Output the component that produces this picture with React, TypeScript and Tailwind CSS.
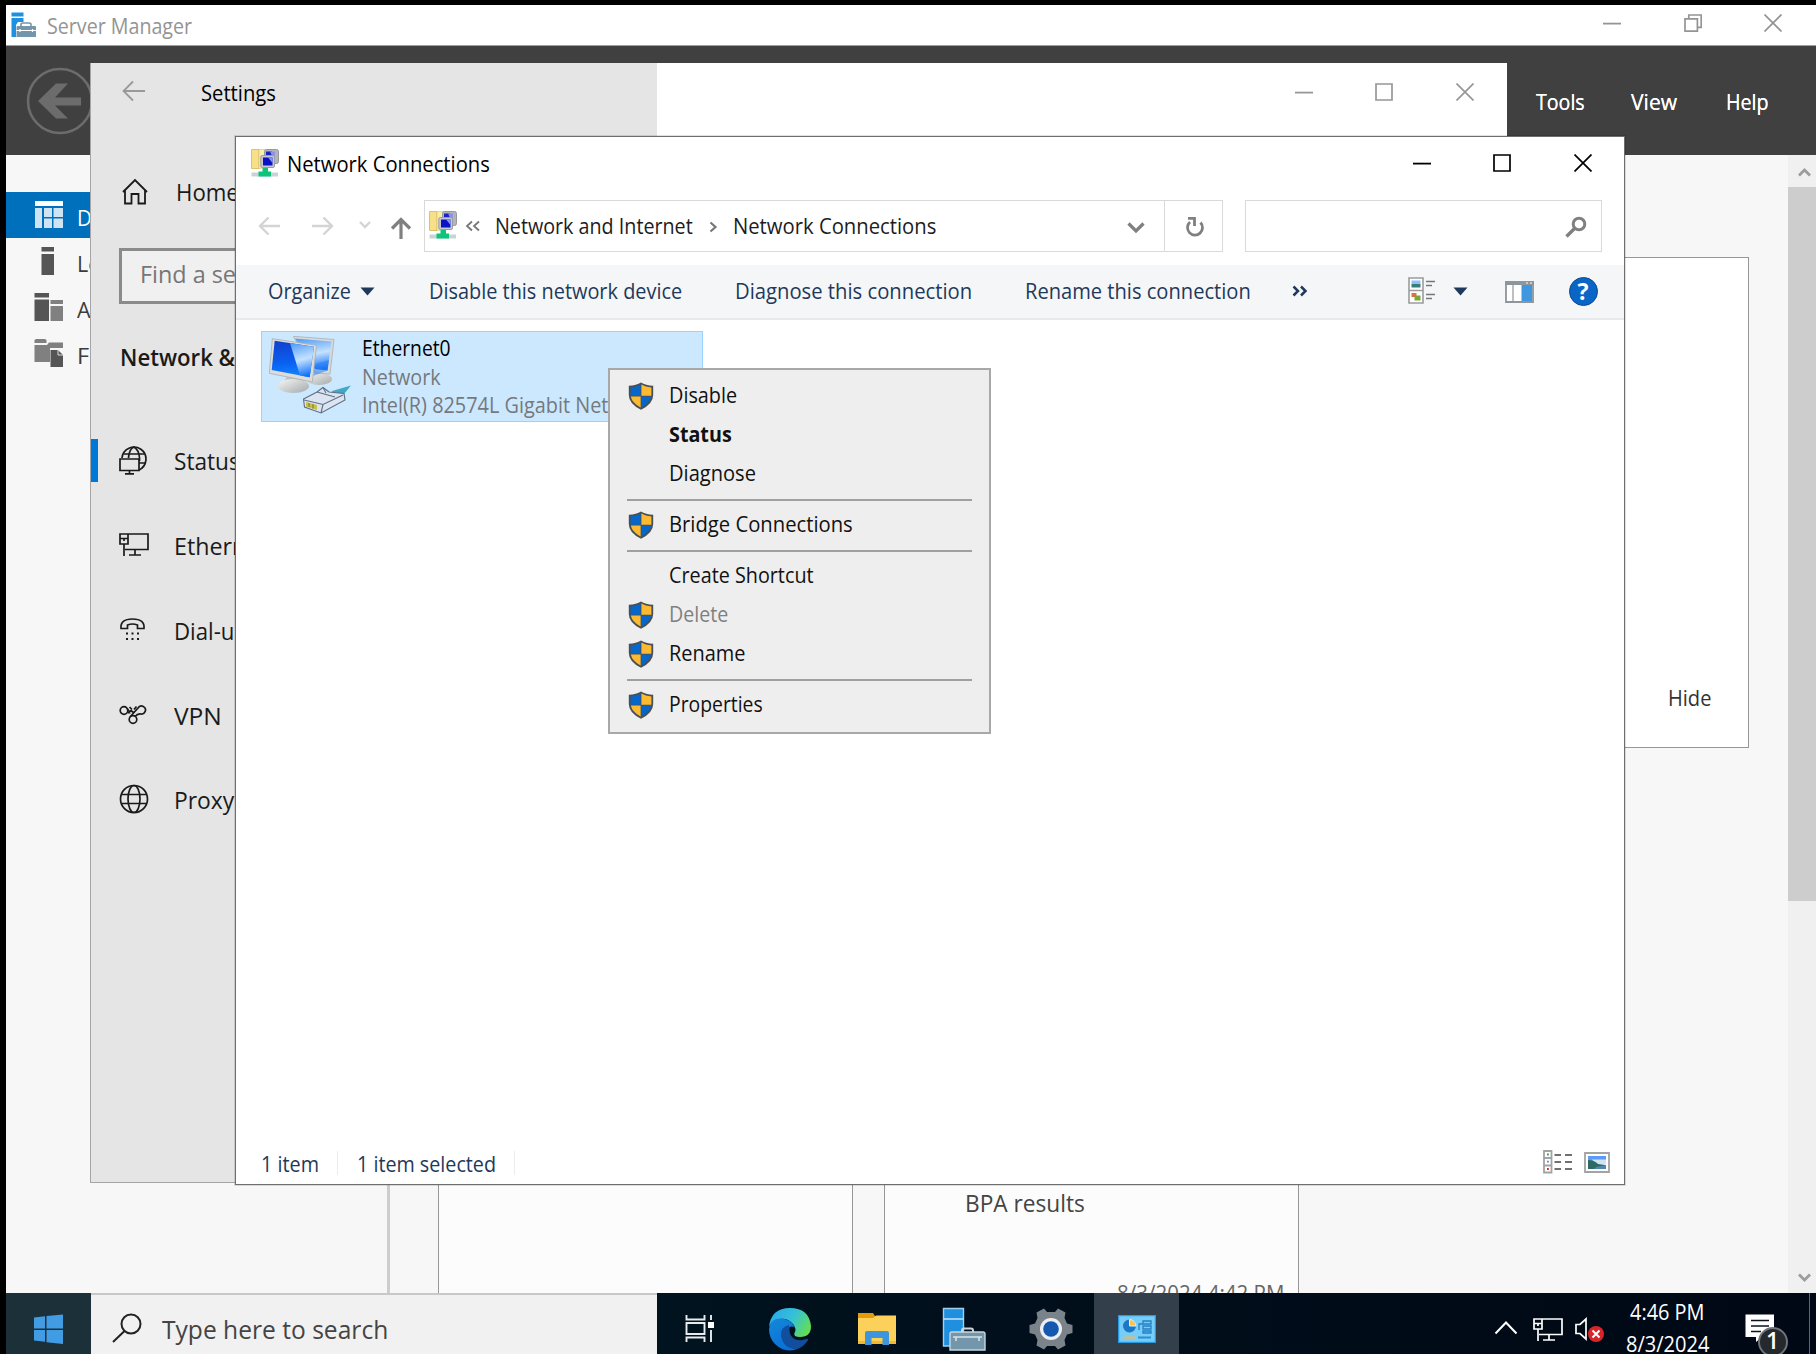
import { useLayoutEffect, useRef } from "react";
import type { ReactNode } from "react";
import clsx from "clsx";

interface LabelProps {
  w: number;
  children: string;
  className?: string;
}

// Fits a single line of text into a fixed width, the way Segoe UI would run
function Label({ w, children, className }: LabelProps) {
  const ref = useRef<HTMLSpanElement>(null);

  useLayoutEffect(() => {
    const el = ref.current;
    if (!el) return;
    el.style.transform = `scaleX(${w / el.offsetWidth})`;
  }, [w, children]);

  return (
    <span className={clsx("block shrink-0 whitespace-nowrap", className)} style={{ width: w }}>
      <span ref={ref} className="inline-block origin-left">
        {children}
      </span>
    </span>
  );
}

interface WindowControlsProps {
  restored?: boolean;
  className?: string;
}

function WindowControls({ restored, className }: WindowControlsProps) {
  return (
    <div className={clsx("flex shrink-0", className)}>
      <div className="w-[80.5px] flex justify-center">
        <svg width="18" height="18" fill="none" stroke="currentColor" strokeWidth="1.8">
          <path d="M0 9.6H18" />
        </svg>
      </div>
      <div className="w-[80.5px] flex justify-center">
        <svg width="18" height="18" fill="none" stroke="currentColor" strokeWidth="1.7">
          {restored ? (
            <path d="M1 4.8H13.4V17.2H1ZM4.8 4.8V1H17.2V13.4H13.4" />
          ) : (
            <path d="M1 1H17V17H1Z" />
          )}
        </svg>
      </div>
      <div className="w-[80.5px] flex justify-center">
        <svg width="18" height="18" fill="none" stroke="currentColor" strokeWidth="1.7">
          <path d="M0.5 0.5L17.5 17.5M17.5 0.5L0.5 17.5" />
        </svg>
      </div>
    </div>
  );
}

function ServerIcon({ className }: { className?: string }) {
  return (
    <svg viewBox="0 0 44 44" className={className}>
      <path d="M1.500 1.500H21.500V39H1.500Z" fill="#1f8fdf" stroke="#9fd0f0" strokeWidth="1.400" />
      <path d="M1.500 12H21.500" stroke="#bfe0f5" strokeWidth="1.600" />
      <path d="M20 25V23.500Q20 21.500 22 21.500H29Q31 21.500 31 23.500V25" fill="none" stroke="#c8d6de" strokeWidth="2" />
      <path d="M10 25H41Q43 25 43 27V43H8V27Q8 25 10 25Z" fill="#7396ab" stroke="#c8d6de" strokeWidth="1.400" />
      <path d="M11 30H40M14 30V34M37 30V34" stroke="#d7e2e8" strokeWidth="1.600" fill="none" />
    </svg>
  );
}

function ServerTitleIcon() {
  return (
    <svg width="26" height="26" viewBox="0 0 26 26" className="shrink-0">
      <path d="M0.5 0.5H12.5V4.5H0.5ZM0.5 6H12.5V10H7L5 13V25H0.5Z" fill="#1f8fdf" />
      <path d="M10 14V12.5Q10 11 12 11H18Q20 11 20 12.5V14" fill="none" stroke="#7396ab" strokeWidth="1.6" />
      <path d="M6.5 14H24Q25 14 25 15V18H5.5V15Q5.5 14 6.5 14ZM5.5 19H25V25H5.5Z" fill="#7396ab" />
      <path d="M9 17V20M21.5 17V20" stroke="#fff" strokeWidth="1.2" />
    </svg>
  );
}

function NetFolderIcon() {
  return (
    <svg width="28" height="30" viewBox="0 0 28 30" className="shrink-0">
      <path d="M0.500 1.500H8V20.500H0.500Z" fill="#f7e08a" stroke="#dcc26a" />
      <path d="M8 1.500H15V19.500L8 20.500Z" fill="#fbeea6" stroke="#dcc26a" strokeWidth="0.600" />
      <rect x="13.500" y="1.500" width="14" height="14" rx="2" fill="#b4b4ba" stroke="#97979e" />
      <path d="M15 3.500H21V8H15Z" fill="#1a23c0" />
      <path d="M19 3.500H24V8H21Z" fill="#8b93e8" />
      <rect x="9.800" y="7.500" width="13.700" height="12" rx="1.500" fill="#c8c8d0" stroke="#9c9ca8" />
      <path d="M12 9.500H21.500V17.500H12Z" fill="#0a12c4" />
      <path d="M17 9.500H21.500V15Z" fill="#7f95f3" />
      <path d="M0.500 24.500H27V28.500H0.500Z" fill="#c9d2d4" />
      <path d="M11.500 20H17V23.500H20V28.500H7.500V23.500H11.500Z" fill="#0cc47a" />
    </svg>
  );
}

function Shield() {
  return (
    <svg width="26" height="28" viewBox="0 0 26 28">
      <path d="M13 0.400Q8.500 3.200 0.800 3.800V13Q0.800 21.800 13 27.800Q25.200 21.800 25.200 13V3.800Q17.500 3.200 13 0.400Z" fill="#4a4f55" />
      <path d="M12.600 2.600Q8.500 5 2.600 5.500V13.800H12.600Z" fill="#0667cb" />
      <path d="M13.400 2.600Q17.500 5 23.400 5.500V13.800H13.400Z" fill="#fdb930" />
      <path d="M12.600 14.500H2.800Q4 20.800 12.600 25.500Z" fill="#fdb930" />
      <path d="M13.400 14.500H23.200Q22 20.800 13.400 25.500Z" fill="#0667cb" />
    </svg>
  );
}

function EthernetIcon({ className }: { className?: string }) {
  return (
    <svg width="30" height="24" fill="none" stroke="currentColor" strokeWidth="1.7" className={className}>
      <path d="M9 1H29V16.500H6M1 1H9V11H1ZM1 5.500H9M5 5V8M5 11V23M16 16.500V22M10 22H22" />
    </svg>
  );
}

function Globe() {
  return (
    <svg width="30" height="30" fill="none" stroke="currentColor" strokeWidth="1.7">
      <circle cx="15" cy="15" r="13.500" />
      <ellipse cx="15" cy="15" rx="6" ry="13.500" />
      <path d="M2.500 10.500H27.500M2.500 19.500H27.500" />
    </svg>
  );
}

function StatusIcon() {
  return (
    <svg width="30" height="30" fill="none" stroke="currentColor" strokeWidth="1.700">
      <path d="M3 13A12 12 0 1 1 20 25" />
      <path d="M9.500 13Q10 4 15 2Q20 5 20.500 13V16M4.500 9H25.500M20 18H27" />
      <path d="M1 14H20V25.500H1ZM10.500 25.500V28.500M6 28.800H15" />
    </svg>
  );
}

function DialIcon() {
  return (
    <svg width="30" height="24" fill="none" stroke="currentColor" strokeWidth="1.700">
      <path d="M2 10.500Q1 1 13.500 1T25 10.500H18.500V7Q13.500 5 8.500 7V10.500Z" />
      <path d="M7 15.500h2M12.500 15.500h2M18 15.500h2M7 21h2M12.500 21h2M18 21h2" strokeWidth="2" />
    </svg>
  );
}

function VpnIcon() {
  return (
    <svg width="30" height="20" fill="none" stroke="currentColor" strokeWidth="1.700">
      <circle cx="5" cy="5.500" r="3.800" />
      <circle cx="14" cy="14.500" r="3.800" />
      <path d="M8.500 4Q11 7 10.500 8.500M11 12L19 3A4 4 0 1 1 21 8.800Q18 9 16 11.500M10.500 2L13 4.500M17.500 1.500L15 4.500M9 8L12 5.500L15 8" />
    </svg>
  );
}

function HomeIcon() {
  return (
    <svg width="28" height="28" fill="none" stroke="currentColor" strokeWidth="1.800">
      <path d="M2 14L14 2L26 14M4 12.500V25.500H10.500V16H17.500V25.500H24V12.500" />
    </svg>
  );
}

const serverNav = [
  {
    text: "Dashboard",
    w: 106,
    icon: (
      <svg width="30" height="30">
        <path d="M1 1H29V6H1Z" fill="#fff" />
        <path d="M1 8H8V28H1ZM10 8H18V17H10ZM19.500 8H29V17H19.500ZM10 18.500H18V28H10ZM19.500 18.500H29V28H19.500Z" fill="#cfe4f3" />
      </svg>
    ),
  },
  {
    text: "Local Server",
    w: 122,
    icon: (
      <svg width="30" height="30" fill="#555">
        <path d="M7.500 1H20V5.500H7.500ZM7.500 8H20V29H7.500Z" />
      </svg>
    ),
  },
  {
    text: "All Servers",
    w: 104,
    icon: (
      <svg width="30" height="30" fill="#555">
        <path d="M0.500 1H15V5.500H0.500ZM0.500 7.500H15V29H0.500Z" />
        <path d="M16.500 8H29V12H16.500ZM16.500 14H29V29H16.500Z" fill="#808080" />
      </svg>
    ),
  },
  {
    text: "File and Storage Services",
    w: 270,
    icon: (
      <svg width="30" height="30" fill="#808080">
        <path d="M0.500 2L2 1H11L12.500 2V5H0.500ZM0.500 7H13L15 4.500H29V10H16V24H0.500Z" />
        <path d="M16.500 12H24L29 17V29H16.500Z" fill="#555" />
        <path d="M24 12V17H29" fill="none" stroke="#ddd" />
      </svg>
    ),
  },
];

function ServerManager() {
  return (
    <div className="absolute left-[6px] top-[5px] w-[1810px] h-[1288px] bg-[#f7f7f7] flex flex-col overflow-hidden">
      <div className="h-[41px] shrink-0 bg-white border-b border-[#a0a0a0] flex items-center pl-[5px] pr-[2.5px] text-[#949494]">
        <ServerTitleIcon />
        <Label w={145} className="ml-[10px] mt-[3px] text-[21px]">Server Manager</Label>
        <WindowControls restored className="ml-auto mb-1" />
      </div>

      <div className="h-[109px] shrink-0 bg-[#404040] flex text-white">
        <svg width="68" height="68" viewBox="0 0 68 68" className="ml-5 mt-[20.500px] shrink-0">
          <circle cx="34" cy="34" r="32" fill="none" stroke="#6c6c6c" strokeWidth="2.600" />
          <path d="M12 34L30 16.500H42L29 30.500H55V38.500H29L42 51.500H30Z" fill="#6c6c6c" />
        </svg>
        <div className="ml-auto mr-[47px] mt-[41px] flex text-[22px] leading-[28px] [text-shadow:0_0_0.5px_white]">
          <Label w={49} className="mr-[46px]">Tools</Label>
          <Label w={46} className="mr-[49px]">View</Label>
          <Label w={43}>Help</Label>
        </div>
      </div>

      <div className="flex-1 min-h-0 flex">
        <div className="w-[381px] shrink-0 pt-[37px]">
          {serverNav.map((item, i) => (
            <div
              key={item.text}
              className={clsx(
                "h-[46px] flex items-center pl-[28px] text-[22px]",
                i === 0 ? "bg-[#0070bc] text-white" : "text-[#3c3c3c]"
              )}
            >
              {item.icon}
              <Label w={item.w} className="ml-[12.500px] mt-[4px]">{item.text}</Label>
            </div>
          ))}
        </div>
        <div className="w-[3px] bg-[#cdcdcd]" />

        <div className="flex-1 pl-[48px] pt-[102px] bg-[#f7f7f7]">
          <div className="w-[1311px] h-[491px] border-[1.5px] border-[#979797] bg-white flex justify-end items-end pr-[37px] pb-[33px] text-[21px] text-[#333]">
            <Label w={43}>Hide</Label>
          </div>
          <div className="mt-[300px] flex gap-[31px]">
            <div className="w-[415px] h-[400px] border-[1.5px] border-[#979797] bg-[#fcfcfc]" />
            <div className="w-[415px] h-[400px] border-[1.5px] border-[#979797] bg-[#fcfcfc] pt-[138px] pl-[80px]">
              <Label w={120} className="text-[24px] leading-[32px] text-[#444]">BPA results</Label>
              <Label w={167} className="ml-[152px] mt-[60px] text-[21px] leading-[28px] text-[#666]">8/3/2024 4:42 PM</Label>
            </div>
          </div>
        </div>

        <div className="w-7 shrink-0 bg-[#f0f0f0] flex flex-col items-center text-[#9c9c9c]">
          <svg width="28" height="32" fill="none" stroke="currentColor" strokeWidth="2.800">
            <path d="M11 20.500L16.500 15L22 20.500" />
          </svg>
          <div className="w-full h-[714px] bg-[#cdcdcd]" />
          <svg width="28" height="32" fill="none" stroke="currentColor" strokeWidth="2.800" className="mt-auto">
            <path d="M11 13.500L16.500 19L22 13.500" />
          </svg>
        </div>
      </div>
    </div>
  );
}

const settingsNav = [
  { text: "Status", w: 66, icon: <StatusIcon /> },
  { text: "Ethernet", w: 94, icon: <EthernetIcon /> },
  { text: "Dial-up", w: 74, icon: <DialIcon /> },
  { text: "VPN", w: 48, icon: <VpnIcon /> },
  { text: "Proxy", w: 60, icon: <Globe /> },
];

function Settings() {
  return (
    <div className="absolute left-[90px] top-[63px] w-[1417px] h-[1120px] bg-white border-[1.5px] border-t-0 border-r-0 border-[#a5a5a5] flex">
      <div className="w-[566px] shrink-0 bg-[#e5e5e5] text-[24px] text-[#1a1a1a]">
        <div className="h-[56px] flex items-center pl-[31px]">
          <svg width="24" height="22" fill="none" stroke="#999" strokeWidth="1.800">
            <path d="M23 11H1.500M11 1.500L1.500 11L11 20.500" />
          </svg>
          <Label w={75} className="ml-[55px] mt-[5px] text-[21px] text-black">Settings</Label>
        </div>
        <div className="mt-[49px] h-[48px] flex items-center pl-[30px]">
          <HomeIcon />
          <Label w={63} className="ml-[26.500px]">Home</Label>
        </div>
        <div className="ml-[28px] mt-[32px] w-[509px] h-[56px] border-[3px] border-[#8a8a8a] bg-[#f0f0f0] flex items-center pl-[18px] pb-[4px] text-[#767676]">
          <Label w={145}>Find a setting</Label>
        </div>
        <Label w={208} className="ml-[28.500px] mt-[37px] leading-[32px] font-semibold">Network &amp; Internet</Label>
        <div className="mt-[45px]">
          {settingsNav.map((item, i) => (
            <div key={item.text} className="h-[84.750px] flex items-center">
              <div className={clsx("w-[7px] h-[43px]", i === 0 && "bg-[#0078d7]")} />
              <div className="w-[30px] ml-[20.500px]">{item.icon}</div>
              <Label w={item.w} className="ml-[25.500px] mt-[2px]">{item.text}</Label>
            </div>
          ))}
        </div>
      </div>
      <WindowControls className="ml-auto mr-[2px] mt-[19.500px] text-[#979797]" />
    </div>
  );
}

function MenuItem({ w, shield, children, className }: LabelProps & { shield?: boolean }) {
  return (
    <div className={clsx("h-[39px] flex items-center pl-[18px]", className)}>
      <div className="w-[26px] mr-[15px]">{shield && <Shield />}</div>
      <Label w={w} className="mt-[1px]">{children}</Label>
    </div>
  );
}

function MenuSeparator() {
  return (
    <div className="h-[12px] flex items-center px-[17px] pt-px">
      <div className="w-full h-[2px] bg-[#a0a0a0]" />
    </div>
  );
}

function ContextMenu() {
  return (
    <div className="absolute left-[608px] top-[368px] w-[383px] h-[366px] bg-[#eee] border-2 border-[#a8a8a8] pt-[6px] text-[21px] text-[#111]">
      <MenuItem w={68} shield>Disable</MenuItem>
      <MenuItem w={63} className="font-bold">Status</MenuItem>
      <MenuItem w={87}>Diagnose</MenuItem>
      <MenuSeparator />
      <MenuItem w={184} shield>Bridge Connections</MenuItem>
      <MenuSeparator />
      <MenuItem w={145}>Create Shortcut</MenuItem>
      <MenuItem w={59} shield className="text-[#808080]">Delete</MenuItem>
      <MenuItem w={77} shield>Rename</MenuItem>
      <MenuSeparator />
      <MenuItem w={94} shield>Properties</MenuItem>
    </div>
  );
}

function AdapterIcon() {
  return (
    <svg width="84" height="82" viewBox="0 0 84 82" className="shrink-0">
      <defs>
        <linearGradient id="screen" x1="0.200" y1="0" x2="0.300" y2="1">
          <stop offset="0" stopColor="#1240cc" />
          <stop offset="0.600" stopColor="#0a5ff0" />
          <stop offset="1" stopColor="#0f86ff" />
        </linearGradient>
        <linearGradient id="glare" x1="0.300" y1="0" x2="0.500" y2="1">
          <stop offset="0" stopColor="#58a0f8" />
          <stop offset="0.500" stopColor="#c4e2ff" />
          <stop offset="1" stopColor="#0f6ff8" />
        </linearGradient>
        <linearGradient id="stand" x1="0" y1="0" x2="1" y2="1">
          <stop offset="0" stopColor="#f6f6f4" />
          <stop offset="1" stopColor="#a4a9ac" />
        </linearGradient>
      </defs>
      <ellipse cx="50" cy="43" rx="13" ry="6" fill="url(#stand)" />
      <path d="M24.300 0.300L65 3.500L61 38L46 37Z" fill="#d8dada" stroke="#a9aeb0" strokeWidth="0.800" />
      <path d="M26 2.500L62.500 5.500L58.500 34.500L46 33Z" fill="url(#glare)" />
      <path d="M44 40L58.500 34.500L60 24L46 28Z" fill="#1f7cf5" opacity="0.500" />
      <path d="M18 40H33L36 48H14Z" fill="#c0c5c7" />
      <ellipse cx="24.500" cy="50" rx="15.500" ry="7" fill="url(#stand)" />
      <path d="M3.300 2.700L47.500 9.300L43.300 46L0.300 37.300Z" fill="#dcdcda" stroke="#a9aeb0" strokeWidth="0.800" />
      <path d="M5.700 4.700L45 10.700L40.700 41.300L2.700 34Z" fill="url(#screen)" />
      <path d="M21 7L45 10.700L40.700 41.300L31 39.500Z" fill="url(#glare)" />
      <path d="M63 55L82 49.500L75 58L66 61Z" fill="#3fa9c6" />
      <path d="M34.500 63L48 56L54 51.500L60 56L75 57.500L76 64L52 77L35.500 71Z" fill="#dbe4f0" stroke="#5f6f86" strokeWidth="1.100" />
      <path d="M35 64L54 68.500L74 59M54 68.500L52 77M48 56L66 61M54 51.500L57 57" stroke="#5f6f86" strokeWidth="1.100" fill="none" />
      <path d="M37 66L48 69V74L37 70.500Z" fill="#c9bf46" />
      <path d="M40 67V71M44 68V72.500" stroke="#77752a" strokeWidth="1" />
    </svg>
  );
}

function CommandBar() {
  return (
    <div className="h-[55px] shrink-0 bg-[#f5f6f7] border-b-2 border-[#e8ebee] flex items-center pl-[32px] pr-[26.500px] text-[21px] text-[#1e395b]">
      <Label w={83}>Organize</Label>
      <svg width="15" height="9" className="ml-[9px]" fill="currentColor">
        <path d="M0.500 0.500H14.500L7.500 8.500Z" />
      </svg>
      <Label w={253} className="ml-[53.500px]">Disable this network device</Label>
      <Label w={237} className="ml-[53px]">Diagnose this connection</Label>
      <Label w={226} className="ml-[53.500px]">Rename this connection</Label>
      <svg width="16" height="12" className="ml-[40.500px] mb-px" fill="none" stroke="currentColor" strokeWidth="2.500">
        <path d="M1.500 1.500L6 6L1.500 10.500M9 1.500L13.500 6L9 10.500" />
      </svg>
      <svg width="28" height="28" className="ml-auto mb-[2px]">
        <path d="M1 1H15V26H1ZM1 13.500H15" fill="#fff" stroke="#9c9c9c" strokeWidth="1.600" />
        <path d="M3.500 3.500H12.500V7H3.500Z" fill="#8cc0fa" />
        <path d="M3.500 7H12.500V10.500H3.500Z" fill="#3c7a7a" />
        <path d="M3.500 16H8.500V20H3.500Z" fill="#e0703a" />
        <path d="M6.500 18.500H12.500V23.500H6.500Z" fill="#7aa63a" />
        <path d="M18 4.500H27M18 8.500H24M18 17.500H27M18 21.500H24" stroke="#777" strokeWidth="1.500" />
      </svg>
      <svg width="15" height="9" className="ml-[17px]" fill="currentColor">
        <path d="M0.500 0.500H14.500L7.500 8.500Z" />
      </svg>
      <svg width="29" height="22" className="ml-[37px]">
        <path d="M1 1H28V21H1Z" fill="#fff" stroke="#8e959b" strokeWidth="1.800" />
        <path d="M0 0H29V4H0Z" fill="#8e959b" />
        <path d="M8 4V20" stroke="#aaa" strokeWidth="1.500" />
        <path d="M16.500 4H27V20H16.500Z" fill="#3f97e0" />
        <path d="M21 2H23M25 2H27" stroke="#fff" />
      </svg>
      <div className="ml-[35px] w-[29px] h-[29px] rounded-full bg-[#0a66c6] border border-[#0a4a94] text-white font-bold text-[23px] leading-[27px] text-center">
        ?
      </div>
    </div>
  );
}

function NetworkConnections() {
  return (
    <div className="absolute left-[235px] top-[136px] w-[1390px] h-[1049px] bg-white border-[1.5px] border-[#6e6e6e] shadow-[0_0_0_1px_rgba(0,0,0,0.12)] flex flex-col">
      <div className="h-[53px] shrink-0 flex items-center pl-[14.500px] text-black text-[21px]">
        <div className="mb-[2px]">
          <NetFolderIcon />
        </div>
        <Label w={203} className="ml-[8.500px] mt-[2px]">Network Connections</Label>
        <WindowControls className="ml-auto mr-[1px] mb-[2px]" />
      </div>

      <div className="h-[75px] shrink-0 flex pt-[10px] text-[21px] text-[#1c1c1c]">
        <div className="w-[187.500px] shrink-0 h-[52px] flex items-center pl-[22px] text-[#d4d4d4]">
          <svg width="22" height="20" fill="none" stroke="currentColor" strokeWidth="2.400">
            <path d="M22 10H2M10.500 1.500L2 10L10.500 18.500" />
          </svg>
          <svg width="22" height="20" className="ml-[31.500px]" fill="none" stroke="currentColor" strokeWidth="2.400">
            <path d="M0 10H20M11.500 1.500L20 10L11.500 18.500" />
          </svg>
          <svg width="12" height="8" className="ml-[25px] mb-[2px]" fill="none" stroke="currentColor" strokeWidth="2.400">
            <path d="M1 1L6 6L11 1" />
          </svg>
          <svg width="22" height="22" className="ml-[19px] mt-[3px]" fill="none" stroke="#808080" strokeWidth="3.200">
            <path d="M11 22V3M2 11.500L11 2.500L20 11.500" />
          </svg>
        </div>
        <div className="w-[741px] shrink-0 h-[52px] border-[1.500px] border-[#d9d9d9] flex items-center pl-[4px] pr-[18.500px]">
          <div className="mb-[2px]">
            <NetFolderIcon />
          </div>
          <svg width="16" height="12" className="ml-[8px]" fill="none" stroke="#777" strokeWidth="1.800">
            <path d="M7 1.500L2 6L7 10.500M14 1.500L9 6L14 10.500" />
          </svg>
          <Label w={198} className="ml-[14px] mt-px">Network and Internet</Label>
          <svg width="9" height="12" className="ml-[16px] mt-[2px]" fill="none" stroke="#777" strokeWidth="2.200">
            <path d="M1.500 1.500L6.500 6L1.500 10.500" />
          </svg>
          <Label w={203.5} className="ml-[15.500px] mt-px">Network Connections</Label>
          <svg width="18" height="12" className="ml-auto mt-1" fill="none" stroke="#808080" strokeWidth="3.200">
            <path d="M1.500 1.500L9 9L16.500 1.500" />
          </svg>
        </div>
        <div className="w-[58px] shrink-0 h-[52px] border-[1.500px] border-l-0 border-[#d9d9d9] flex items-center justify-center">
          <svg width="20" height="22" className="mt-[2px] ml-[3px]" fill="none" stroke="#808080" strokeWidth="2.800">
            <path d="M15.500 6.500A7.500 7.500 0 1 1 5 6" />
            <path d="M3 2.400H9.500V10" />
          </svg>
        </div>
        <div className="ml-[22px] w-[357px] h-[52px] border-[1.500px] border-[#d9d9d9] flex items-center justify-end pr-[14px]">
          <svg width="22" height="22" className="mt-px" fill="none" stroke="#808080" strokeWidth="3">
            <circle cx="14" cy="8" r="5.800" />
            <path d="M10 12L1.500 20.500" strokeWidth="3.400" />
          </svg>
        </div>
      </div>

      <CommandBar />

      <div className="flex-1 pl-[25px] pt-[10.500px]">
        <div className="w-[442px] h-[91.500px] bg-[#cce8ff] border-[1.500px] border-[#99d1ff] flex pl-[7px] pt-[4.500px]">
          <AdapterIcon />
          <div className="ml-[8.500px] -mt-[2px] text-[21px] leading-[28.500px] text-[#75797d]">
            <Label w={89} className="text-black">Ethernet0</Label>
            <Label w={79}>Network</Label>
            <Label w={246}>Intel(R) 82574L Gigabit Net</Label>
          </div>
        </div>
      </div>

      <div className="h-[42px] shrink-0 flex items-center pl-[24.500px] pr-[14px] text-[21px] text-[#1e395b]">
        <Label w={57.5} className="mt-[3px]">1 item</Label>
        <div className="ml-[19px] w-px h-[24px] bg-[#ececec]" />
        <Label w={139} className="ml-[18.500px] mt-[3px]">1 item selected</Label>
        <div className="ml-[18px] w-px h-[24px] bg-[#ececec]" />
        <svg width="30" height="24" className="ml-auto mb-[2px]">
          <path d="M1 1H8.500V22.500H1ZM1 8H8.500M1 15.500H8.500" fill="#fff" stroke="#a3a3a3" strokeWidth="1.800" />
          <path d="M4 4.500h1.800" stroke="#3c9a62" strokeWidth="1.800" />
          <path d="M4 11.700h1.800" stroke="#3c8aff" strokeWidth="1.800" />
          <path d="M4 19h1.800" stroke="#e02020" strokeWidth="1.800" />
          <path d="M11.500 5H18M22 5H29M11.500 12H18M22 12H29M11.500 19H18M22 19H29" stroke="#707070" strokeWidth="1.800" />
        </svg>
        <svg width="26" height="21" className="ml-[11px] mb-[2px]">
          <path d="M1 1H25V20H1Z" fill="#fff" stroke="#a3a3a3" strokeWidth="1.800" />
          <path d="M4 4H22V10H4Z" fill="#5d9cf5" />
          <path d="M8 7.500H22V12H12Z" fill="#cfe3f5" />
          <path d="M4 8Q10 8 14 12L22 13V17H4Z" fill="#2f6a62" />
          <path d="M12 15L22 13V17H10Z" fill="#4f86b5" />
        </svg>
      </div>
    </div>
  );
}

function TaskButton({ children, active }: { children: ReactNode; active?: boolean }) {
  return (
    <div
      className={clsx(
        "shrink-0 h-full flex items-center justify-center pt-[10px]",
        active ? "w-[85px] bg-[#333f4a]" : "w-[87px]"
      )}
    >
      {children}
    </div>
  );
}

function Taskbar() {
  return (
    <div className="absolute left-[6px] top-[1293px] w-[1810px] h-[61px] bg-linear-to-r from-[#031c24] via-[#00101c] to-[#000815] flex overflow-hidden">
      <div className="w-[85px] shrink-0 bg-[#1b3038] pl-[28px] pt-[20.500px]">
        <svg width="30" height="31" fill="#429ce3">
          <path d="M0 3.500L11 2.300V14.500H0ZM12.500 2L29 0.500V14.500H12.500ZM0 16H11V27.800L0 26.500ZM12.500 16H29V30L12.500 28.200Z" />
        </svg>
      </div>
      <div className="w-[566px] shrink-0 bg-[#f1f1f1] border-t-2 border-[#c8c8c8] flex items-center pl-[21px] pt-[9px] text-[26px] text-[#444]">
        <svg width="30" height="30" className="mb-[3px]" fill="none" stroke="#222" strokeWidth="2">
          <circle cx="19" cy="11" r="9.500" />
          <path d="M12.500 18L1 29" />
        </svg>
        <Label w={226} className="ml-[20px] mt-px">Type here to search</Label>
      </div>

      <div className="w-[86px] mr-[3px] shrink-0 flex justify-center pt-[20.500px]">
        <svg width="30" height="30" fill="none" stroke="#e8ecee" strokeWidth="1.900">
          <path d="M1.500 1V5.500H19.500V1M1.500 9H19.500V20H1.500ZM1.500 28V23.500H19.500V28M26 1V6M26 16V28" />
          <path d="M23 8H29V14H23Z" fill="#fff" stroke="none" />
        </svg>
      </div>
      <TaskButton>
        <svg width="44" height="44" viewBox="0 0 44 44">
          <defs>
            <linearGradient id="edgeTop" x1="0" y1="0.300" x2="1" y2="0.700">
              <stop offset="0" stopColor="#2ba8ea" />
              <stop offset="0.500" stopColor="#35c1d8" />
              <stop offset="1" stopColor="#66e04c" />
            </linearGradient>
            <linearGradient id="edgeBody" x1="0" y1="0" x2="0.600" y2="1">
              <stop offset="0" stopColor="#1389d8" />
              <stop offset="1" stopColor="#0a6fd8" />
            </linearGradient>
          </defs>
          <path d="M1 20Q3 1 22 1T43 19Q43 30 32 30Q25 30 26.500 26Q29 22 25 17Q18 9 8 13Q3 15 1 20Z" fill="url(#edgeTop)" />
          <path d="M1 22Q2 11 13 11.500Q23 12 26.500 20Q21 18 19 24Q17 36 28 42.500Q16 46 7 37Q1 31 1 22Z" fill="url(#edgeBody)" />
          <path d="M21 18Q12 20 13 29Q15 41 28 42.500Q36 40 40 33Q40 31 38 32Q30 35 25 31Q21 27 21.500 22Z" fill="#114f9e" />
        </svg>
      </TaskButton>
      <TaskButton>
        <svg width="40" height="34" viewBox="0 0 40 34">
          <path d="M1 1H16L18 4V8H1Z" fill="#e39b08" />
          <path d="M1 6H16L19 3.500H39V32H1Z" fill="#fbd15c" />
          <path d="M1 29H39V32H1Z" fill="#f0b92e" />
          <path d="M8 33V21Q8 19 10 19H30Q32 19 32 21V33H25.500V26H14.500V33Z" fill="#3d95dc" />
        </svg>
      </TaskButton>
      <TaskButton>
        <ServerIcon className="w-[44px] h-[44px]" />
      </TaskButton>
      <TaskButton>
        <svg width="44" height="44" viewBox="0 0 44 44">
          <path d="M15 1.500L18 5H26L29 1.500L36.500 5.500L35.500 11L38 16.500L43.500 18V26L38 27.500L35.500 33L36.500 38.500L29 42.500L26 39H18L15 42.500L7.500 38.500L8.500 33L6 27.500L0.500 26V18L6 16.500L8.500 11L7.500 5.500Z" fill="#7a828a" />
          <circle cx="22" cy="22" r="11" fill="#eceef2" />
          <circle cx="22" cy="22" r="7.800" fill="#1458b0" />
        </svg>
      </TaskButton>
      <TaskButton active>
        <svg width="38" height="28" viewBox="0 0 38 28">
          <path d="M0.500 0.500H37.500V27.500H0.500Z" fill="#76cdfa" stroke="#2a9be0" strokeWidth="1.500" />
          <circle cx="11.500" cy="11" r="6.500" fill="#1b78c4" />
          <path d="M11.500 11V4.500A6.500 6.500 0 0 1 18 11Z" fill="#fcc24a" stroke="#d9f1fe" strokeWidth="1" />
          <path d="M21 15V9H25M25 6H33V9H25ZM25 11H33V14H25ZM25 16H33V18H25Z" fill="none" stroke="#2580c2" strokeWidth="1.300" />
          <path d="M5 22.500H18" stroke="#f2b550" strokeWidth="2" />
          <path d="M20 22.500H33" stroke="#2a8fd0" strokeWidth="2" />
        </svg>
      </TaskButton>

      <div className="ml-auto shrink-0 flex text-white">
        <svg width="24" height="16" className="mt-[27px]" fill="none" stroke="currentColor" strokeWidth="2">
          <path d="M1.500 13.500L12 2.500L22.500 13.500" />
        </svg>
        <EthernetIcon className="ml-[15px] mt-[24.500px]" />
        <svg width="32" height="26" className="ml-[12px] mt-[24px]" fill="none" stroke="currentColor" strokeWidth="1.700">
          <path d="M1 7.500H5L11 2V22L5 16.500H1Z" />
          <circle cx="21" cy="17" r="8" fill="#d9252a" stroke="none" />
          <path d="M17.500 13.500L24.500 20.500M24.500 13.500L17.500 20.500" strokeWidth="2" />
        </svg>
        <div className="ml-[19.500px] w-[83px] flex flex-col items-center text-[21px] leading-[32px] pt-[2.500px]">
          <Label w={75}>4:46 PM</Label>
          <Label w={83}>8/3/2024</Label>
        </div>
        <div className="relative ml-[35.500px] mt-[21px] w-[44px] h-[44px]">
          <svg width="30" height="30" className="block">
            <path d="M0.500 0.500H29V23H17L11 28V23H0.500Z" fill="#fff" />
            <path d="M6 6.500H24M6 12H24M6 17.500H16" stroke="#0a1220" strokeWidth="1.500" />
          </svg>
          <div className="absolute left-[13px] top-[13px] w-[30px] h-[30px] rounded-full bg-[#25282c] border-[2.500px] border-[#70757a] text-[23px] leading-[23px] text-center font-semibold">
            1
          </div>
        </div>
        <div className="ml-[20px] mr-[6px] w-[1.500px] bg-[#5b6470]" />
      </div>
    </div>
  );
}

export default function App() {
  return (
    <div className="relative w-[1816px] h-[1354px] bg-black overflow-hidden font-['Open_Sans',sans-serif]">
      <ServerManager />
      <Settings />
      <NetworkConnections />
      <ContextMenu />
      <Taskbar />
    </div>
  );
}
